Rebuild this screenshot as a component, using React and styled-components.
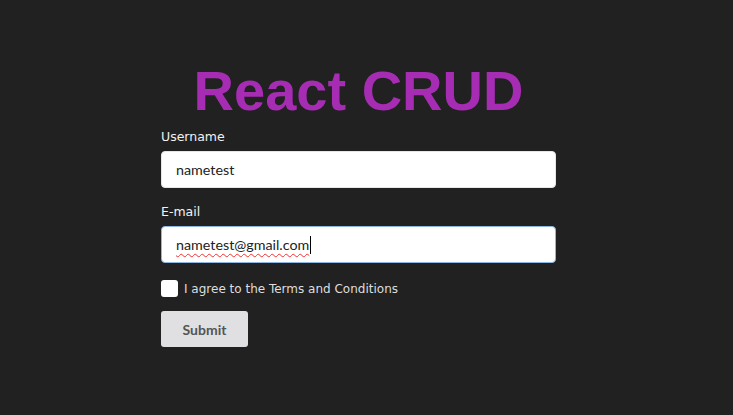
import React from "react";
import styled, { createGlobalStyle } from "styled-components";

const Global = createGlobalStyle`
  html, body { margin: 0; padding: 0; background: #212121; }
  body { font-family: "Open Sans", sans-serif; }
`;

const Page = styled.div`
  min-height: 415px;
  display: flex;
  justify-content: center;
  padding: 56px 16px 0 0;
  box-sizing: border-box;
`;

const Form = styled.form`
  width: 395px;
  display: flex;
  flex-direction: column;
`;

const Title = styled.h1`
  margin: 0 0 2px;
  font-family: "Liberation Sans", Arial, sans-serif;
  font-weight: 700;
  font-size: 56px;
  line-height: 70px;
  color: #a62db3;
  text-align: center;
`;

const Label = styled.label`
  font-family: "DejaVu Sans", sans-serif;
  font-size: 12.5px;
  color: #f2f2f2;
  line-height: 18px;
  margin-bottom: 5px;
`;

const Field = styled.div`
  height: 37px;
  box-sizing: border-box;
  background: #fff;
  border-radius: 4px;
  border: 1px solid ${(p) => (p.$focused ? "#8fb6e0" : "#e6e6e6")};
  padding: 0 14px;
  display: flex;
  align-items: center;
  font-family: Lato, sans-serif;
  font-size: 14.3px;
  color: #222;
  margin-bottom: ${(p) => p.$gap}px;
`;

const Misspelled = styled.span`
  text-decoration: underline wavy #e33;
  text-decoration-thickness: 1px;
  text-underline-offset: 3px;
`;

const Caret = styled.span`
  display: inline-block;
  width: 1px;
  height: 18px;
  background: #000;
  margin-left: 1px;
`;

const CheckRow = styled.div`
  display: flex;
  align-items: center;
  gap: 6px;
  margin-bottom: 14px;
`;

const Box = styled.span`
  width: 17px;
  height: 17px;
  background: #fff;
  border-radius: 3px;
  box-sizing: border-box;
`;

const CheckText = styled.span`
  font-family: "DejaVu Sans", sans-serif;
  font-size: 12px;
  color: #dedede;
`;

const Button = styled.button`
  align-self: flex-start;
  width: 87px;
  height: 36px;
  border: none;
  border-radius: 3px;
  background: #e0e0e2;
  color: #555;
  font-family: Lato, sans-serif;
  font-weight: 700;
  font-size: 14px;
`;

export default function App() {
  return (
    <>
      <Global />
      <Page>
        <Form onSubmit={(e) => e.preventDefault()}>
          <Title>React CRUD</Title>
          <Label>Username</Label>
          <Field $gap={15}>nametest</Field>
          <Label>E-mail</Label>
          <Field $focused $gap={17}>
            <Misspelled>nametest@gmail.com</Misspelled>
            <Caret />
          </Field>
          <CheckRow>
            <Box />
            <CheckText>I agree to the Terms and Conditions</CheckText>
          </CheckRow>
          <Button type="submit">Submit</Button>
        </Form>
      </Page>
    </>
  );
}
